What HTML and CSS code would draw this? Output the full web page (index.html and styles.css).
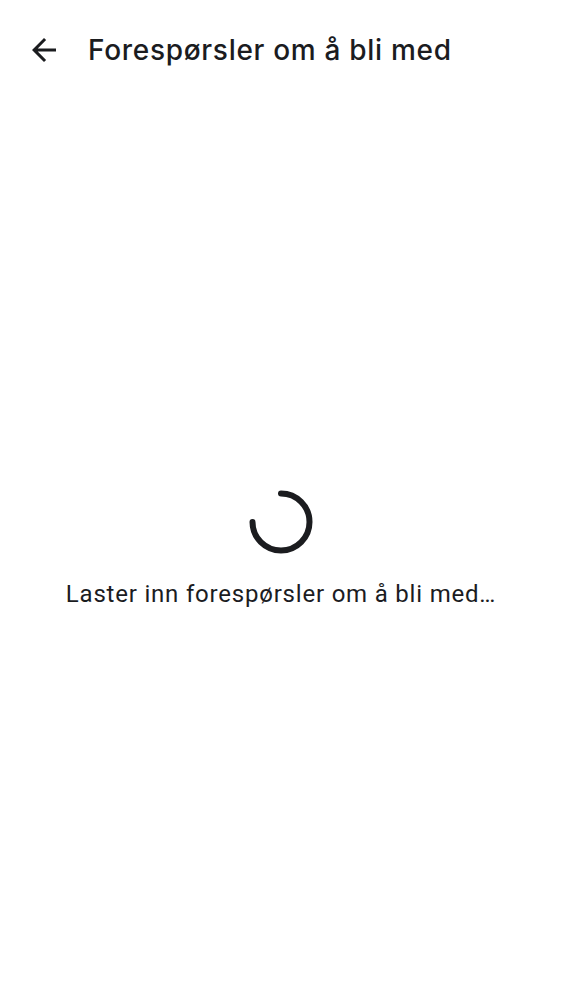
FILE: index.html
```html
<!DOCTYPE html>
<html lang="no">
<head>
<meta charset="utf-8">
<link rel="stylesheet" href="styles.css">
</head>
<body>
<div class="app">
  <header class="topbar">
    <button class="back" aria-label="Tilbake">
      <svg width="24" height="24" viewBox="4 4 16 16" aria-hidden="true"><path d="M20 11H7.83l5.59-5.59L12 4l-8 8 8 8 1.41-1.41L7.83 13H20v-2z" fill="#1b1c1f"/></svg>
    </button>
    <h1 class="title">Forespørsler om å bli med</h1>
  </header>
  <main class="content">
    <svg class="spinner" width="64" height="64" viewBox="0 0 64 64" aria-hidden="true">
      <path d="M32 3.5 A28.5 28.5 0 1 1 3.5 32" fill="none" stroke="#1b1c1f" stroke-width="6" stroke-linecap="round"/>
    </svg>
    <p class="loading">Laster inn forespørsler om å bli med…</p>
  </main>
</div>
</body>
</html>
```
FILE: styles.css
```css
html, body {
  margin: 0;
  padding: 0;
  background: #ffffff;
}
body {
  font-family: Roboto, "Noto Sans", sans-serif;
  color: #1b1c1f;
}
.app {
  display: flex;
  flex-direction: column;
  height: 1000px;
}
.topbar {
  display: flex;
  align-items: center;
  height: 100px;
  padding: 0 0 0 20px;
}
.back {
  border: none;
  background: none;
  padding: 0;
  width: 48px;
  height: 48px;
  display: flex;
  align-items: center;
  justify-content: center;
  margin-right: 20px;
}
.title {
  margin: 0;
  font-family: Inter, Roboto, sans-serif;
  font-size: 28px;
  font-weight: 500;
  letter-spacing: 0.7px;
  line-height: 36px;
}
.content {
  flex: 1;
  display: flex;
  flex-direction: column;
  align-items: center;
  justify-content: center;
}
.spinner {
  display: block;
}
.loading {
  margin: 24px 0 0;
  font-size: 24px;
  letter-spacing: 0.8px;
  line-height: 32px;
}
```
